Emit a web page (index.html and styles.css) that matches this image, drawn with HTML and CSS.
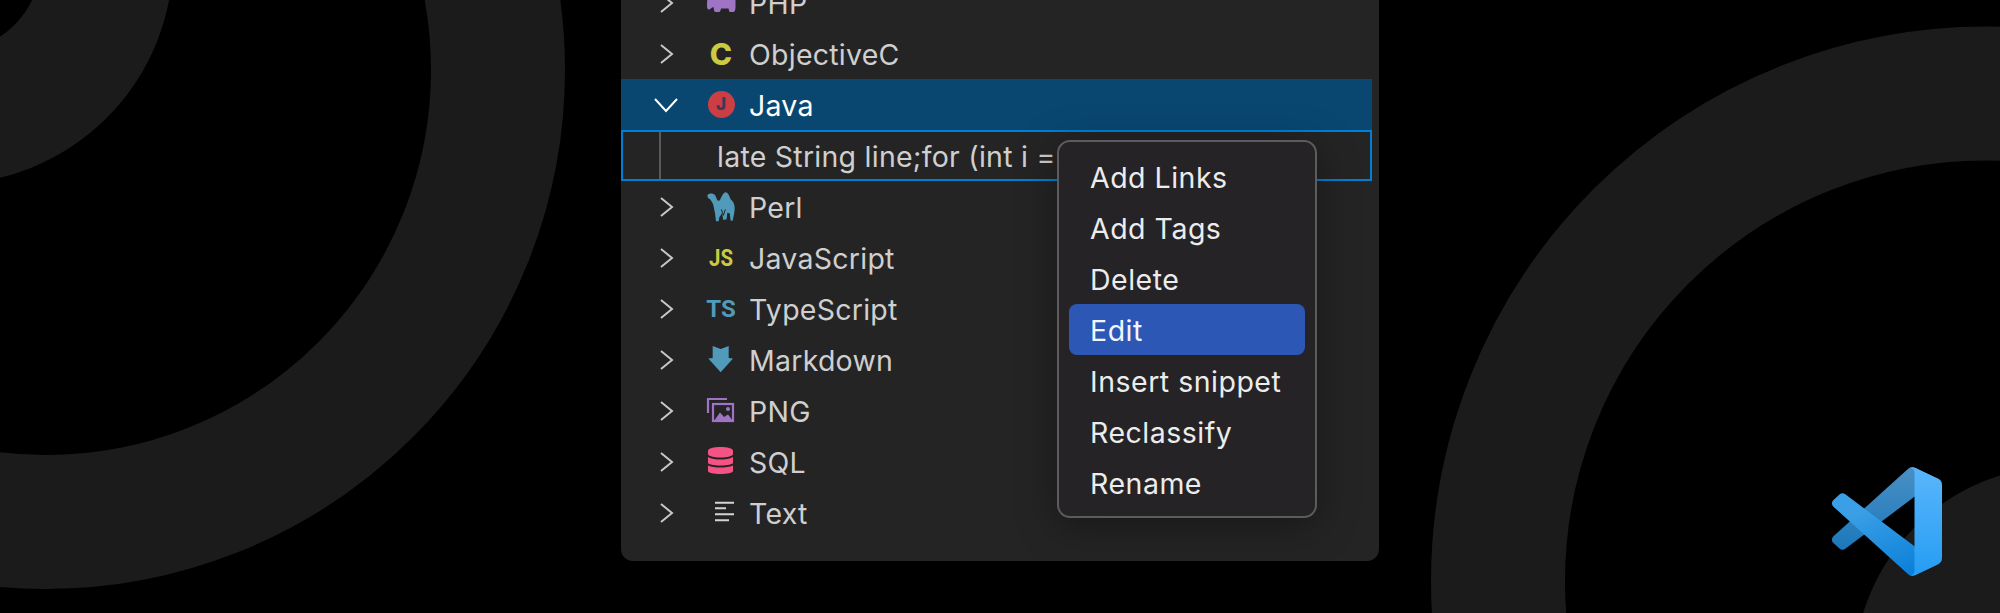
FILE: index.html
```html
<!DOCTYPE html>
<html lang="en">
<head>
<meta charset="utf-8">
<title>Snippets</title>
<link rel="stylesheet" href="styles.css">
</head>
<body>
<div class="page">
  <svg class="rings" width="2000" height="613" viewBox="0 0 2000 613" aria-hidden="true">
    <circle cx="46" cy="70" r="452" class="ring" stroke-width="134"/>
    <circle cx="-53" cy="-42" r="160.5" class="ring" stroke-width="131"/>
    <circle cx="1986" cy="581.5" r="488" class="ring" stroke-width="134"/>
    <circle cx="2062" cy="674" r="208" class="disc"/>
  </svg>

  <section class="panel">
    <div class="row">
      <svg class="chev" viewBox="0 0 24 24"><path d="M7 3L18 12L7 21"/></svg>
      <span class="icon"><svg width="30" height="31" viewBox="0 0 30 31"><path class="purple" d="M6 6H24C28 6 29.5 10 29.5 14V20C29.5 22 29 24 28 25H24C23 25 23 23 22.5 21.5H15C14.5 23 14.5 25 13 25H9.500C8 25 8 22 7.500 20C5.500 20 5 22.500 3 22.500C1 22.500 1 20 1 18C1 12 2 6 6 6Z"/></svg></span>
      <span class="label">PHP</span>
    </div>
    <div class="row">
      <svg class="chev" viewBox="0 0 24 24"><path d="M7 3L18 12L7 21"/></svg>
      <span class="icon"><span class="glyph-c">C</span></span>
      <span class="label">ObjectiveC</span>
    </div>
    <div class="row row-selected">
      <svg class="chev" viewBox="0 0 24 24"><path d="M1 6L12 18L23 6"/></svg>
      <span class="icon"><span class="glyph-j">J</span></span>
      <span class="label">Java</span>
    </div>
    <div class="row row-edit">
      <span class="indent"></span>
      <span class="label edit-text">late String line;for (int i =</span>
    </div>
    <div class="row">
      <svg class="chev" viewBox="0 0 24 24"><path d="M7 3L18 12L7 21"/></svg>
      <span class="icon"><svg width="30" height="31" viewBox="0 0 30 31"><g transform="translate(-16 -11) scale(.3333)"><path class="blue" d="M52 46C54 42 60 40 68 41C74 42 78 48 80 56C82 62 86 64 90 60C94 54 96 42 106 37C114 36 118 48 122 58C128 64 134 70 134 84C134 96 131 108 128 122L122 122L119 100L112 98L110 118L100 120L96 100L88 112L86 124L78 124L75 100C72 88 72 76 66 66C62 60 60 56 54 54Z"/><path class="camel-line" d="M94 88L100 106L106 88"/></g></svg></span>
      <span class="label">Perl</span>
    </div>
    <div class="row">
      <svg class="chev" viewBox="0 0 24 24"><path d="M7 3L18 12L7 21"/></svg>
      <span class="icon"><span class="glyph-js">JS</span></span>
      <span class="label">JavaScript</span>
    </div>
    <div class="row">
      <svg class="chev" viewBox="0 0 24 24"><path d="M7 3L18 12L7 21"/></svg>
      <span class="icon"><span class="glyph-ts">TS</span></span>
      <span class="label">TypeScript</span>
    </div>
    <div class="row">
      <svg class="chev" viewBox="0 0 24 24"><path d="M7 3L18 12L7 21"/></svg>
      <span class="icon"><svg width="30" height="31" viewBox="0 0 30 31"><path class="blue" d="M6.700 2L14.700 5L22.700 2V14L27 14.500L14.700 28.300L2.300 14.500L6.700 14Z"/></svg></span>
      <span class="label">Markdown</span>
    </div>
    <div class="row">
      <svg class="chev" viewBox="0 0 24 24"><path d="M7 3L18 12L7 21"/></svg>
      <span class="icon"><svg width="30" height="31" viewBox="0 0 30 31"><path class="png-line" d="M2 18V4H21"/><rect class="png-line" x="7" y="9" width="20" height="17"/><path class="purple" d="M8 26L14 17.500L18 22L22 19.500L27 26Z"/><circle class="purple" cx="22" cy="14" r="2"/></svg></span>
      <span class="label">PNG</span>
    </div>
    <div class="row">
      <svg class="chev" viewBox="0 0 24 24"><path d="M7 3L18 12L7 21"/></svg>
      <span class="icon"><svg width="30" height="31" viewBox="0 0 30 31"><path class="pink" d="M2 5C2 2 8 1 14.500 1S27 2 27 5V8C27 10 21 11.500 14.500 11.500S2 10 2 8Z"/><path class="pink" d="M2 11C5 13 10 13.500 14.500 13.500S24 13 27 11V17C27 18 21 19.500 14.500 19.500S2 18 2 17Z"/><path class="pink" d="M2 19.500C5 21 10 21.500 14.500 21.500S24 21 27 19.500V25C27 27 21 28 14.500 28S2 27 2 25Z"/></svg></span>
      <span class="label">SQL</span>
    </div>
    <div class="row">
      <svg class="chev" viewBox="0 0 24 24"><path d="M7 3L18 12L7 21"/></svg>
      <span class="icon"><svg width="30" height="31" viewBox="0 0 30 31"><path class="text-lines" d="M9 5.700H28M9 11.300H20M9 17.300H28M9 23.300H23"/></svg></span>
      <span class="label">Text</span>
    </div>

    <ul class="menu">
      <li class="menu-item">Add Links</li>
      <li class="menu-item">Add Tags</li>
      <li class="menu-item">Delete</li>
      <li class="menu-item menu-item-active">Edit</li>
      <li class="menu-item">Insert snippet</li>
      <li class="menu-item">Reclassify</li>
      <li class="menu-item">Rename</li>
    </ul>
  </section>

  <svg class="logo" width="110" height="109" viewBox="0 0 100 100" preserveAspectRatio="none" aria-hidden="true">
    <defs>
      <linearGradient id="gBack" x1="0.5" y1="0" x2="0.5" y2="1"><stop offset="0" stop-color="#4a8fc4"/><stop offset="1" stop-color="#1b78bb"/></linearGradient>
      <linearGradient id="gMid" x1="0.3" y1="0.2" x2="0.7" y2="1"><stop offset="0" stop-color="#3a9fe6"/><stop offset="1" stop-color="#0a7fd8"/></linearGradient>
      <linearGradient id="gFront" x1="0.5" y1="0" x2="0.5" y2="1"><stop offset="0" stop-color="#5ab6fc"/><stop offset="1" stop-color="#259df2"/></linearGradient>
    </defs>
    <path fill="url(#gBack)" d="M96.4614 10.7962L75.8569 0.875542C73.4719 -0.272773 70.6217 0.211611 68.75 2.08333L1.29858 63.5832C-0.515693 65.2373 -0.513607 68.0937 1.30308 69.7452L6.81272 74.754C8.29793 76.1042 10.5347 76.2036 12.1338 74.9905L93.3609 13.3699C96.086 11.3026 100 13.2462 100 16.6667V16.4275C100 14.0265 98.6246 11.8378 96.4614 10.7962Z"/>
    <path fill="url(#gMid)" d="M96.4614 89.2038L75.8569 99.1245C73.4719 100.273 70.6217 99.7884 68.75 97.9167L1.29858 36.4169C-0.515693 34.7627 -0.513607 31.9063 1.30308 30.2548L6.81272 25.246C8.29793 23.8958 10.5347 23.7964 12.1338 25.0095L93.3609 86.6301C96.086 88.6974 100 86.7538 100 83.3334V83.5726C100 85.9735 98.6246 88.1622 96.4614 89.2038Z"/>
    <path fill="url(#gFront)" d="M75.8578 99.1263C73.4721 100.274 70.6219 99.7885 68.75 97.9166C71.0564 100.223 75 98.5895 75 95.3278V4.67213C75 1.41039 71.0564 -0.223106 68.75 2.08329C70.6219 0.211402 73.4721 -0.273666 75.8578 0.873633L96.4587 10.7807C98.6234 11.8217 100 14.0112 100 16.4132V83.5871C100 85.9891 98.6234 88.1786 96.4586 89.2196L75.8578 99.1263Z"/>
  </svg>
</div>
</body>
</html>
```

FILE: styles.css
```css
* { box-sizing: border-box; }
html, body { margin: 0; padding: 0; background: #000; }
.page {
  position: relative;
  width: 2000px;
  height: 613px;
  overflow: hidden;
  display: flex;
  justify-content: center;
  align-items: flex-start;
  font-family: Inter, "Liberation Sans", sans-serif;
}
.rings { position: absolute; left: 0; top: 0; }
.ring { fill: none; stroke: #1b1b1b; }
.disc { fill: #1b1b1b; }

.panel {
  position: relative;
  width: 758px;
  margin-top: -23px;
  padding: 0 7px 23px 0;
  background: #242425;
  border-radius: 0 0 12px 12px;
}
.row {
  display: flex;
  align-items: center;
  height: 51px;
  padding-left: 33px;
  color: #cfcfcf;
}
.chev {
  width: 24px;
  height: 24px;
  flex: none;
  margin-right: 28px;
  fill: none;
  stroke: #c8c8c8;
  stroke-width: 2;
}
.icon {
  width: 30px;
  height: 31px;
  flex: none;
  margin-right: 13px;
  display: flex;
  align-items: center;
  justify-content: center;
}
.label {
  padding-top: 2px;
  font-size: 28.5px;
  letter-spacing: .25px;
  line-height: 49px;
  white-space: nowrap;
}
.row-selected { background: #094771; color: #fff; }
.row-selected .chev { stroke: #fff; }
.row-edit {
  padding-left: 36px;
  border: 2px solid #007fd4;
  align-items: stretch;
}
.indent { width: 2px; background: #5a5a5a; margin-right: 56px; flex: none; }
.edit-text { line-height: 45px; }

.purple { fill: #a074c4; }
.blue { fill: #519aba; }
.pink { fill: #f55385; }
.camel-line { fill: none; stroke: #242425; stroke-width: 3; }
.png-line { fill: none; stroke: #a074c4; stroke-width: 2.2; }
.text-lines { fill: none; stroke: #d4d4d4; stroke-width: 2; }
.glyph-c { font-size: 30px; font-weight: 800; line-height: 1; color: #cbcb41; }
.glyph-j {
  width: 27px;
  height: 27px;
  border-radius: 50%;
  background: #cc3e44;
  color: #3b3a55;
  font-size: 17px;
  font-weight: 800;
  line-height: 27px;
  text-align: center;
}
.glyph-js, .glyph-ts {
  font-family: Roboto, sans-serif;
  font-size: 24px;
  font-weight: 700;
  line-height: 1;
  white-space: nowrap;
}
.glyph-js { color: #cbcb41; transform: scaleX(.85); }
.glyph-ts { color: #519aba; }

.menu {
  position: absolute;
  left: 436px;
  top: 163px;
  width: 260px;
  margin: 0;
  padding: 9px 10px 8px;
  list-style: none;
  background: #252326;
  border: 2px solid #5c5c5c;
  border-radius: 13px;
  box-shadow: 0 8px 40px rgba(0, 0, 0, .35);
}
.menu-item {
  height: 51px;
  padding: 2px 0 0 21px;
  border-radius: 8px;
  font-size: 28.5px;
  letter-spacing: .5px;
  line-height: 49px;
  color: #ececec;
}
.menu-item-active { background: #2c57b5; color: #f2f5ff; }

.logo { position: absolute; left: 1832px; top: 467px; }
```
